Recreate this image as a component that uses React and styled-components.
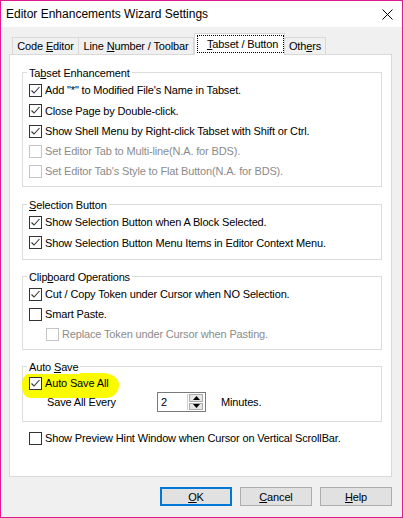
import React from "react";
import styled, { createGlobalStyle } from "styled-components";

const Global = createGlobalStyle`
  html, body { margin: 0; padding: 0; background: #ffffff; }
  body { font-family: "Liberation Sans", Arial, sans-serif; font-size: 11px; color: #000; }
  * { box-sizing: border-box; }
`;

const Window = styled.div`
  width: 403px;
  height: 518px;
  border: 1px solid #e3188f;
  background: #f0f0f0;
  display: flex;
  flex-direction: column;
`;

const TitleBar = styled.div`
  height: 26px;
  background: #ffffff;
  display: flex;
  align-items: center;
  justify-content: space-between;
  padding-left: 5px;
  font-size: 12px;
`;

const CloseBox = styled.div`
  width: 30px;
  height: 26px;
  display: flex;
  align-items: center;
  justify-content: center;
`;

const Client = styled.div`
  flex: 1;
  display: flex;
  flex-direction: column;
  padding: 0 10px 0 8px;
  letter-spacing: -0.15px;
`;

const TabStrip = styled.div`
  display: flex;
  align-items: flex-end;
  height: 21px;
  margin-top: 6px;
  padding-left: 3px;
  position: relative;
  z-index: 1;
`;

const Tab = styled.div`
  width: ${(p) => p.$w}px;
  height: ${(p) => (p.$active ? 22 : 17)}px;
  margin-left: ${(p) => p.$ml || 0}px;
  margin-bottom: ${(p) => (p.$active ? -1 : 0)}px;
  border: 1px solid #d9d9d9;
  border-bottom: none;
  background: ${(p) => (p.$active ? "#ffffff" : "#f0f0f0")};
  display: flex;
  align-items: center;
  justify-content: ${(p) => (p.$active ? "flex-start" : "center")};
  padding-left: ${(p) => (p.$active ? 2 : 0)}px;
  padding-bottom: ${(p) => (p.$active ? 2 : 0)}px;
  white-space: nowrap;
`;

const Focus = styled.span`
  display: flex;
  align-items: center;
  width: 87px;
  height: 18px;
  padding-left: 9px;
  border: 1px dotted #000;
`;

const Key = styled.span`
  text-decoration: underline;
`;

const Panel = styled.div`
  height: 423px;
  border: 1px solid #d9d9d9;
  background: #ffffff;
  padding: 17px 9px 0 12px;
  display: flex;
  flex-direction: column;
`;

const Group = styled.div`
  position: relative;
  border: 1px solid #dcdcdc;
  padding: 0 6px ${(p) => p.$pb}px 6px;
  margin-bottom: ${(p) => p.$mb}px;
  display: flex;
  flex-direction: column;
`;

const Legend = styled.div`
  align-self: flex-start;
  height: 14px;
  line-height: 14px;
  margin: -7px 0 0 -2px;
  padding: 0 2px;
  background: #ffffff;
  white-space: nowrap;
  position: relative;
  z-index: 1;
`;

const Row = styled.div`
  height: ${(p) => p.$h || 20}px;
  display: flex;
  align-items: center;
  padding-left: ${(p) => p.$indent || 0}px;
  position: relative;
  z-index: 1;
  white-space: nowrap;
  color: ${(p) => (p.$disabled ? "#8b8b8b" : "#000")};
`;

const Box = styled.span`
  width: 13px;
  height: 13px;
  flex: none;
  border: 1px solid ${(p) => (p.$disabled ? "#c4c4c4" : "#333333")};
  background: #ffffff;
  display: flex;
  align-items: center;
  justify-content: center;
`;

const LabelText = styled.span`
  margin-left: 3px;
`;

const Highlight = styled.div`
  position: absolute;
  left: -1px;
  top: 6px;
  width: 97px;
  height: 25px;
  background: #fbfb00;
  border-radius: 9px 16px 13px 8px / 10px 12px 13px 11px;
  z-index: 0;
`;

const FieldLabel = styled.span`
  width: 128px;
  padding-left: 18px;
`;

const SpinEdit = styled.div`
  width: 49px;
  height: 20px;
  border: 1px solid #7a7a7a;
  background: #ffffff;
  display: flex;
  align-items: center;
  justify-content: space-between;
  padding: 1px 2px 1px 2px;
`;

const SpinText = styled.span`
  padding-left: 1px;
`;

const SpinButtons = styled.div`
  width: 16px;
  height: 16px;
  display: flex;
  flex-direction: column;
  gap: 1px;
  border-left: 1px solid #d0d0d0;
  padding-left: 1px;
`;

const SpinBtn = styled.div`
  flex: 1;
  background: #e6e6e6;
  border: 1px solid #adadad;
  display: flex;
  align-items: center;
  justify-content: center;
`;

const Suffix = styled.span`
  margin-left: 15px;
`;

const ButtonRow = styled.div`
  display: flex;
  justify-content: flex-end;
  gap: 8px;
  margin-top: 10px;
`;

const Button = styled.div`
  width: 72px;
  height: 19px;
  border: ${(p) => (p.$primary ? "2px solid #0078d7" : "1px solid #adadad")};
  background: #e1e1e1;
  display: flex;
  align-items: center;
  justify-content: center;
`;

const Check = ({ checked, disabled }) => (
  <Box $disabled={disabled}>
    {checked && (
      <svg width="11" height="11" viewBox="0 0 11 11">
        <path d="M1.5 5.5 L4 8 L9.5 2" fill="none" stroke="#333" strokeWidth="1.1" />
      </svg>
    )}
  </Box>
);

const CheckRow = ({ h, indent, checked, disabled, children }) => (
  <Row $h={h} $indent={indent} $disabled={disabled}>
    <Check checked={checked} disabled={disabled} />
    <LabelText>{children}</LabelText>
  </Row>
);

const Tri = ({ up }) => (
  <svg width="7" height="4" viewBox="0 0 7 4">
    <path d={up ? "M0 4 L3.5 0 L7 4 Z" : "M0 0 L3.5 4 L7 0 Z"} fill="#000" />
  </svg>
);

export default function App() {
  return (
    <>
      <Global />
      <Window>
        <TitleBar>
          <span>Editor Enhancements Wizard Settings</span>
          <CloseBox>
            <svg width="11" height="11" viewBox="0 0 11 11">
              <path d="M0.5 0.5 L10.5 10.5 M10.5 0.5 L0.5 10.5" stroke="#000" strokeWidth="1" />
            </svg>
          </CloseBox>
        </TitleBar>
        <Client>
          <TabStrip>
            <Tab $w={67}>
              <span>Code <Key>E</Key>ditor</span>
            </Tab>
            <Tab $w={116} $ml={-1}>
              <span>Line <Key>N</Key>umber / Toolbar</span>
            </Tab>
            <Tab $w={91} $active>
              <Focus>
                <span><Key>T</Key>abset / Button</span>
              </Focus>
            </Tab>
            <Tab $w={42} $ml={-1}>
              <span>Oth<Key>e</Key>rs</span>
            </Tab>
          </TabStrip>
          <Panel>
            <Group $pb={5} $mb={17}>
              <Legend>Ta<Key>b</Key>set Enhancement</Legend>
              <CheckRow h={20} checked>Add "*" to Modified File's Name in Tabset.</CheckRow>
              <CheckRow h={21} checked>Close Page by Double-click.</CheckRow>
              <CheckRow h={20} checked>Show Shell Menu by Right-click Tabset with Shift or Ctrl.</CheckRow>
              <CheckRow h={20} disabled>Set Editor Tab to Multi-line(N.A. for BDS).</CheckRow>
              <CheckRow h={20} disabled>Set Editor Tab's Style to Flat Button(N.A. for BDS).</CheckRow>
            </Group>
            <Group $pb={6} $mb={16}>
              <Legend><Key>S</Key>election Button</Legend>
              <CheckRow h={20} checked>Show Selection Button when A Block Selected.</CheckRow>
              <CheckRow h={21} checked>Show Selection Button Menu Items in Editor Context Menu.</CheckRow>
            </Group>
            <Group $pb={5} $mb={16}>
              <Legend>Clip<Key>b</Key>oard Operations</Legend>
              <CheckRow h={20} checked>Cut / Copy Token under Cursor when NO Selection.</CheckRow>
              <CheckRow h={20}>Smart Paste.</CheckRow>
              <CheckRow h={20} indent={17} disabled>Replace Token under Cursor when Pasting.</CheckRow>
            </Group>
            <Group $pb={9} $mb={6}>
              <Highlight />
              <Legend>Auto <Key>S</Key>ave</Legend>
              <CheckRow h={18} checked>Auto Save All</CheckRow>
              <Row $h={20}>
                <FieldLabel>Save All Every</FieldLabel>
                <SpinEdit>
                  <SpinText>2</SpinText>
                  <SpinButtons>
                    <SpinBtn><Tri up /></SpinBtn>
                    <SpinBtn><Tri /></SpinBtn>
                  </SpinButtons>
                </SpinEdit>
                <Suffix>Minutes.</Suffix>
              </Row>
            </Group>
            <CheckRow h={20} indent={7}>Show Preview Hint Window when Cursor on Vertical ScrollBar.</CheckRow>
          </Panel>
          <ButtonRow>
            <Button $primary><span><Key>O</Key>K</span></Button>
            <Button><span><Key>C</Key>ancel</span></Button>
            <Button><span><Key>H</Key>elp</span></Button>
          </ButtonRow>
        </Client>
      </Window>
    </>
  );
}
